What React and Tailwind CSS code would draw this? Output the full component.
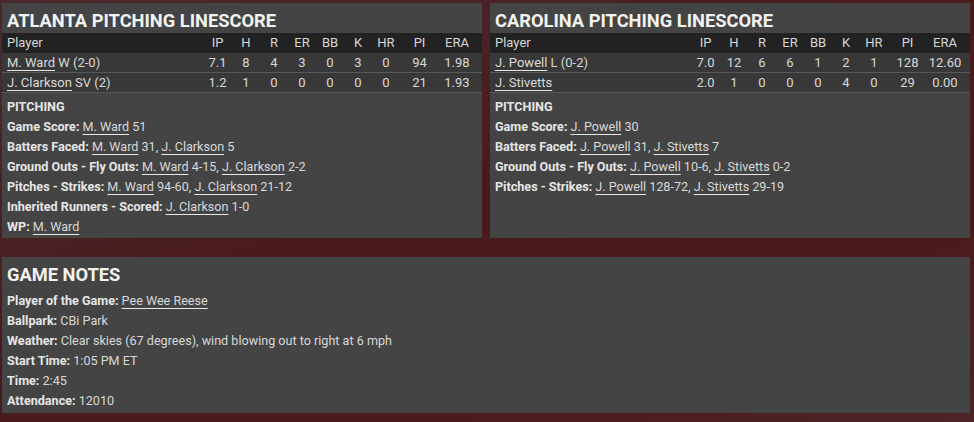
const font = { fontFamily: 'Roboto, "Liberation Sans", sans-serif' };

const cols = ['IP', 'H', 'R', 'ER', 'BB', 'K', 'HR', 'PI', 'ERA'];

const teams = [
  {
    name: 'ATLANTA PITCHING LINESCORE',
    rows: [
      { player: 'M. Ward', note: 'W (2-0)', stats: ['7.1', '8', '4', '3', '0', '3', '0', '94', '1.98'] },
      { player: 'J. Clarkson', note: 'SV (2)', stats: ['1.2', '1', '0', '0', '0', '0', '0', '21', '1.93'] },
    ],
    lines: [
      ['Game Score:', [['M. Ward', '51']]],
      ['Batters Faced:', [['M. Ward', '31'], ['J. Clarkson', '5']]],
      ['Ground Outs - Fly Outs:', [['M. Ward', '4-15'], ['J. Clarkson', '2-2']]],
      ['Pitches - Strikes:', [['M. Ward', '94-60'], ['J. Clarkson', '21-12']]],
      ['Inherited Runners - Scored:', [['J. Clarkson', '1-0']]],
      ['WP:', [['M. Ward', '']]],
    ],
  },
  {
    name: 'CAROLINA PITCHING LINESCORE',
    rows: [
      { player: 'J. Powell', note: 'L (0-2)', stats: ['7.0', '12', '6', '6', '1', '2', '1', '128', '12.60'] },
      { player: 'J. Stivetts', note: '', stats: ['2.0', '1', '0', '0', '0', '4', '0', '29', '0.00'] },
    ],
    lines: [
      ['Game Score:', [['J. Powell', '30']]],
      ['Batters Faced:', [['J. Powell', '31'], ['J. Stivetts', '7']]],
      ['Ground Outs - Fly Outs:', [['J. Powell', '10-6'], ['J. Stivetts', '0-2']]],
      ['Pitches - Strikes:', [['J. Powell', '128-72'], ['J. Stivetts', '29-19']]],
    ],
  },
];

const Name = ({ children }) => (
  <span className="underline decoration-[#e8e8e8] underline-offset-[3px]">{children}</span>
);

const Title = ({ children }) => (
  <div className="h-[30px] px-[5px] pt-[6px] text-[18.3px] leading-[24px] font-bold text-[#f2f2f2]">
    {children}
  </div>
);

const Line = ({ label, children }) => (
  <div className="h-[20px] px-[5px] text-[12.6px] leading-[20px] text-[#d8d8d8] whitespace-nowrap">
    <span className="font-bold text-[#e6e6e6]">{label}</span> {children}
  </div>
);

const grid = 'grid grid-cols-[201px_29px_28px_28px_28px_28px_28px_28px_39px_36px] pr-[7px]';

const TeamPanel = ({ team }) => (
  <div className="w-[480px] h-[235px] bg-[#444444]">
    <Title>{team.name}</Title>
    <div className={`${grid} h-[20px] bg-[#222222] text-[13px] leading-[20px] text-[#d6d6d6]`}>
      <div className="pl-[5px]">Player</div>
      {cols.map((c) => (
        <div key={c} className="text-center">{c}</div>
      ))}
    </div>
    {team.rows.map((r) => (
      <div
        key={r.player}
        className={`${grid} h-[20px] bg-[#383838] border-b border-[#575757] text-[13px] leading-[19px] text-[#d8d8d8]`}
      >
        <div className="pl-[5px] whitespace-nowrap">
          <Name>{r.player}</Name>
          {r.note && ` ${r.note}`}
        </div>
        {r.stats.map((s, i) => (
          <div key={i} className="text-center">{s}</div>
        ))}
      </div>
    ))}
    <div className="pt-[4px]">
      <div className="h-[20px] px-[5px] text-[12.6px] leading-[20px] font-bold text-[#e6e6e6]">PITCHING</div>
      {team.lines.map(([label, items]) => (
        <Line key={label} label={label}>
          {items.map(([p, v], i) => (
            <span key={p}>
              {i > 0 && ', '}
              <Name>{p}</Name>
              {v && ` ${v}`}
            </span>
          ))}
        </Line>
      ))}
    </div>
  </div>
);

export default function App() {
  return (
    <div
      style={font}
      className="w-[974px] h-[422px] overflow-hidden pt-[3px] pl-[2px] bg-[linear-gradient(160deg,#4a2a2f_0%,#4a1b1e_45%,#4b1a1c_75%,#4e2428_100%)]"
    >
      <div className="flex gap-[8px]">
        {teams.map((t) => (
          <TeamPanel key={t.name} team={t} />
        ))}
      </div>
      <div className="mt-[19px] w-[968px] h-[156px] bg-[#444444]">
        <Title>GAME NOTES</Title>
        <div className="pt-[4px]">
          <Line label="Player of the Game:">
            <Name>Pee Wee Reese</Name>
          </Line>
          <Line label="Ballpark:">CBi Park</Line>
          <Line label="Weather:">Clear skies (67 degrees), wind blowing out to right at 6 mph</Line>
          <Line label="Start Time:">1:05 PM ET</Line>
          <Line label="Time:">2:45</Line>
          <Line label="Attendance:">12010</Line>
        </div>
      </div>
    </div>
  );
}
